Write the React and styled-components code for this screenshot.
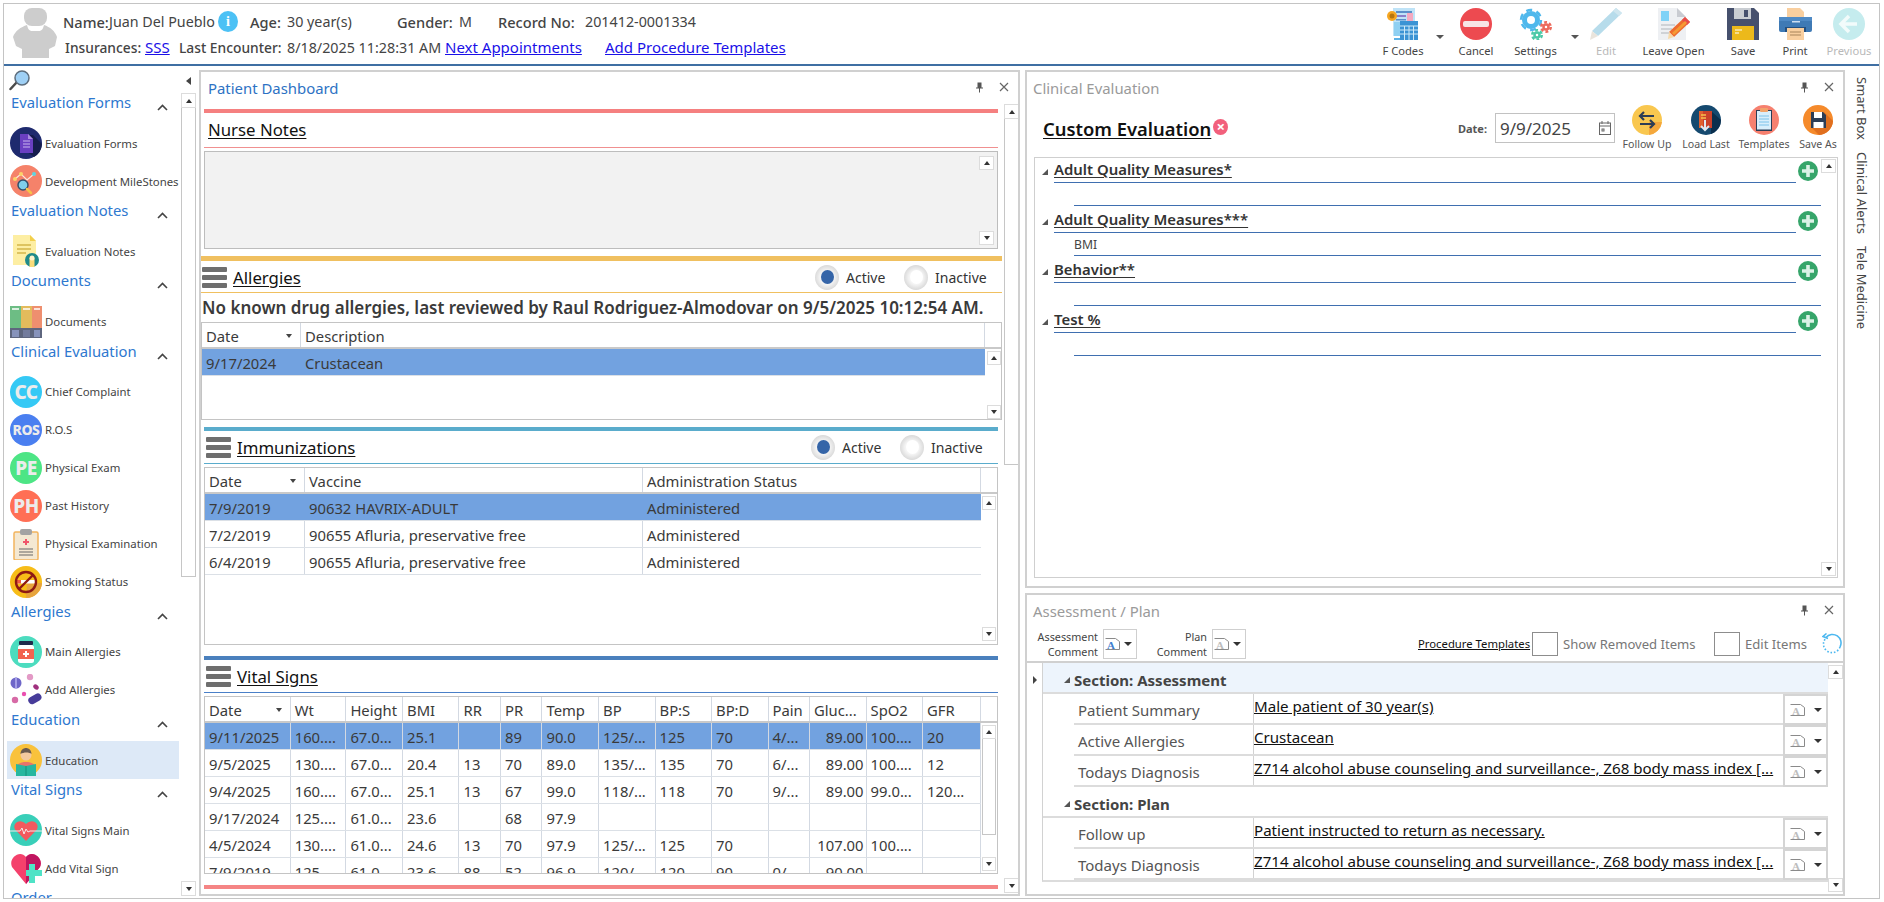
import React from 'react';
import styled, { createGlobalStyle } from 'styled-components';

const Global = createGlobalStyle`
  html, body { margin: 0; padding: 0; background: #fff; }
  body { width: 1884px; height: 902px; overflow: hidden; font-family: "Noto Sans", "Open Sans", sans-serif; color: #333; }
  * { box-sizing: border-box; }
`;

const Frame = styled.div`
  margin: 3px 0 0 3px; width: 1877px; height: 896px;
  border: 1px solid #c4c4c4; display: flex; flex-direction: column; overflow: hidden;
`;
const Header = styled.header`
  height: 62px; flex: none; display: flex; border-bottom: 2px solid #3f6fa3;
`;
const AvatarSlot = styled.div`margin: 4px 6px 0 9px; flex: none;`;
const PatientInfo = styled.div`flex: 1; padding-top: 5px;`;
const InfoRow = styled.div`display: flex; align-items: center; height: 25.5px; font-size: 14.3px; white-space: nowrap;`;
const Field = styled.div`display: flex; align-items: center; flex: none; width: ${p => p.$w}px;`;
const Label = styled.span`
  font-weight: 500; font-size: ${p => p.$s || 14.6}px; color: #444; flex: none; width: ${p => p.$w ? p.$w + 'px' : 'auto'}; padding-left: ${p => p.$pl || 0}px;
`;
const Value = styled.span`color: #444; flex: none; width: ${p => p.$w ? p.$w + 'px' : 'auto'};`;
const HeadLink = styled.a`color: #1a10e8; font-size: 15px; text-decoration: underline; flex: none; width: ${p => p.$w ? p.$w + 'px' : 'auto'};`;
const InfoBadge = styled.span`
  width: 20px; height: 21px; border-radius: 50%; background: #4cc1f5; color: #fff; margin-left: 3px; flex: none;
  display: flex; align-items: center; justify-content: center; font-size: 14px; font-family: "Liberation Serif", serif; font-weight: 700;
`;
const Toolbar = styled.div`display: flex; flex: none; width: 503px; padding-top: 4px;`;
const ToolItem = styled.div`
  width: ${p => p.$w}px; flex: none; display: flex; flex-direction: column; align-items: center;
  font-size: 11.2px; color: ${p => p.$off ? '#b9b9b9' : '#444'}; white-space: nowrap;
`;
const ToolLabel = styled.span`margin-top: 3px; line-height: 16px;`;
const CaretSlot = styled.div`width: ${p => p.$w}px; flex: none; display: flex; justify-content: center; padding-top: 27px;`;
const Caret = styled.i`
  display: block; width: 0; height: 0; border-left: 4px solid transparent; border-right: 4px solid transparent;
  border-top: 4px solid ${p => p.$c || '#555'};
`;

const Body = styled.div`flex: 1; display: flex; min-height: 0;`;

const Nav = styled.nav`width: 195px; flex: none; display: flex; flex-direction: column; min-height: 0;`;
const NavTop = styled.div`height: 26px; flex: none; display: flex; align-items: flex-start; justify-content: space-between; padding: 4px 8px 0 5px;`;
const CollapseArrow = styled.i`
  display: block; width: 0; height: 0; margin-top: 7px; border-top: 4px solid transparent; border-bottom: 4px solid transparent; border-right: 5px solid #444;
`;
const NavBody = styled.div`flex: 1; display: flex; min-height: 0;`;
const NavList = styled.div`width: 177px; flex: none; overflow: hidden; padding-left: 3px;`;
const NavHead = styled.div`
  height: 32.2px; display: flex; justify-content: space-between; align-items: flex-start;
  padding: 0 13px 0 4px; font-size: 14.8px; line-height: 20px; color: #2e78cf; 
`;
const Chevron = styled.svg`margin-top: 12px; flex: none;`;
const NavItem = styled.div`
  height: 38px; display: flex; align-items: center; gap: 3px; padding-left: 3px; font-size: 11.4px; color: #444; white-space: nowrap;
  background: ${p => p.$on ? '#dde9f7' : 'transparent'}; width: 172px;
`;
const IconCircle = styled.span`
  width: 32px; height: 32px; flex: none; border-radius: 50%; background: ${p => p.$c}; color: #ececec; font-weight: 800;
  display: flex; align-items: center; justify-content: center; font-size: ${p => p.$s || 19}px; letter-spacing: -0.5px;
`;
const Scroll = styled.div`
  width: ${p => p.$w || 15}px; flex: none; display: flex; flex-direction: column; justify-content: space-between; height: ${p => p.$h ? p.$h + 'px' : 'auto'};
  margin: ${p => p.$m || 0};
`;
const ScrollPart = styled.div`display: flex; flex-direction: column;`;
const ScrollBtn = styled.div`
  height: ${p => p.$h || 15}px; flex: none; border: 1px solid #dcdcdc; display: flex; align-items: center; justify-content: center; background: #fff;
`;
const Thumb = styled.div`height: ${p => p.$h}px; border: 1px solid #c6c6c6; border-top: none; background: #fff;`;
const Tri = styled.i`
  display: block; width: 0; height: 0; border-left: 3.5px solid transparent; border-right: 3.5px solid transparent;
  ${p => p.$down ? 'border-top: 4px solid #333;' : 'border-bottom: 4px solid #333;'}
`;

const Panel = styled.section`
  border: 2px solid #d0d0d0; display: flex; flex-direction: column; min-height: 0; overflow: hidden; flex: none;
  height: ${p => p.$h}px; width: ${p => p.$w ? p.$w + 'px' : 'auto'}; margin: ${p => p.$m || 0};
`;
const PanelBar = styled.div`
  height: 32px; flex: none; display: flex; align-items: center; justify-content: space-between; padding: 0 9px 0 ${p => p.$pl || 6}px;
  font-size: 14.9px; color: ${p => p.$blue ? '#2d72c4' : '#9a9a9a'};
`;
const PanelTools = styled.div`display: flex; align-items: center; gap: 15px; margin-top: -2px;`;

const DashBody = styled.div`flex: 1; display: flex; min-height: 0;`;
const DashContent = styled.div`width: 802px; flex: none; overflow: hidden;`;
const Inset = styled.div`padding: 0 ${p => p.$r}px 0 ${p => p.$l}px; margin-top: ${p => p.$t || 0}px;`;
const ColorBar = styled.div`height: ${p => p.$h || 4}px; background: ${p => p.$c};`;
const SectionHead = styled.div`
  height: ${p => p.$h}px; display: flex; align-items: center; border-bottom: 1px solid ${p => p.$c};
  padding: ${p => p.$pt || 0}px 0 ${p => p.$pb || 0}px ${p => p.$pl || 0}px;
`;
const SectionTitle = styled.span`font-size: 16.8px; color: #111; text-decoration: underline; text-underline-offset: 2px; margin-left: ${p => p.$ml || 0}px;`;
const Burger = styled.span`display: flex; flex-direction: column; gap: 3px; width: 25px; flex: none;`;
const BurgerBar = styled.i`display: block; height: 5px; background: #6e6e6e; border-radius: 1px;`;
const RadioGroup = styled.div`margin-left: auto; display: flex; align-items: center; font-size: 14px; color: #333; padding-right: ${p => p.$pr}px;`;
const Radio = styled.span`
  width: 24px; height: 25px; border-radius: 50%; flex: none; display: flex; align-items: center; justify-content: center;
  background: radial-gradient(circle, #f4f4f4 40%, #d6d6d6 75%, #f0f0f0 100%); margin-right: 7px;
`;
const RadioDot = styled.i`display: block; width: 13px; height: 14px; border-radius: 50%; background: ${p => p.$on ? '#3565a8' : '#fff'};`;
const RadioLabel = styled.span`width: ${p => p.$w}px;`;

const NotesBox = styled.div`
  margin-top: 3px; height: 98px; background: #f2f2f2; border: 1px solid #bdbdbd; display: flex; justify-content: flex-end; padding: 4px 3px 3px 0;
`;
const Notice = styled.div`height: 29px; display: flex; align-items: center; padding-left: 1px; font-size: 17px; font-weight: 600; color: #3a3a3a; white-space: nowrap;`;

const TableBox = styled.div`
  height: ${p => p.$h}px; border: 1px solid #c4c4c4; display: flex; flex-direction: column; overflow: hidden; margin-top: ${p => p.$t || 0}px;
`;
const TableRow = styled.div`
  display: grid; grid-template-columns: ${p => p.$cols}; height: 27px; flex: none;
  background: ${p => p.$sel ? '#72a2e0' : 'transparent'}; border-bottom: 1px solid #dbe0e6;
`;
const HeadRow = styled(TableRow)`height: 26px; border-bottom: 2px solid #c9c9c9; color: #444;`;
const Cell = styled.div`
  font-size: 14.8px; line-height: 20px; padding: 2px 2px 0 4px; white-space: nowrap; overflow: hidden; color: #3a3a3a;
  border-right: ${p => p.$line ? '1px solid #d3d9e2' : 'none'}; display: flex; justify-content: ${p => p.$right ? 'flex-end' : 'space-between'}; align-items: center;
`;
const TableBody = styled.div`flex: 1; display: flex; min-height: 0; overflow: hidden;`;
const RowsCol = styled.div`width: ${p => p.$w}px; flex: none; overflow: hidden;`;
const SortMark = styled.i`
  display: block; flex: none; margin-right: 6px; width: 0; height: 0; border-left: 3px solid transparent; border-right: 3px solid transparent; border-top: 4px solid #444;
`;

const RightCol = styled.div`width: 820px; flex: none; margin-left: 5px; padding-top: 4px;`;
const EvalTop = styled.div`height: 53px; flex: none; display: flex; padding-left: 16px;`;
const EvalTitle = styled.h2`
  margin: 12px 0 0; font-size: 18.4px; line-height: 26px; font-weight: 600; color: #111; text-decoration: underline; text-underline-offset: 2px; white-space: nowrap; height: 26px;
`;
const ClearIcon = styled.span`
  margin: 15px 0 0 2px; width: 15px; height: 16px; border-radius: 50%; background: #f2607c; color: #fff; font-size: 15px; font-weight: 700; line-height: 15px; text-align: center; flex: none;
`;
const DateLabel = styled.span`margin: 17px 0 0 auto; font-size: 11px; font-weight: 700; color: #555;`;
const DateInput = styled.div`
  margin: 9px 0 0 8px; width: 120px; height: 30px; border: 1px solid #c2c2c2; display: flex; align-items: center; justify-content: space-between; padding: 0 3px 0 4px; font-size: 17px; color: #444; flex: none;
`;
const QuickActions = styled.div`display: flex; margin: 1px 0 0 2px; flex: none;`;
const QuickItem = styled.div`
  width: ${p => p.$w}px; display: flex; flex-direction: column; align-items: center; font-size: 10.6px; color: #555; white-space: nowrap;
`;
const QuickLabel = styled.span`margin-top: 2px; line-height: 14px;`;
const EvalList = styled.div`
  flex: 1; margin: 0 5px 8px 7px; border: 1px solid #cfcfcf; display: flex; min-height: 0;
`;
const EvalGroups = styled.div`width: 786px; flex: none; padding-top: 1px;`;
const EvalGroup = styled.div`height: 50px;`;
const EvalHead = styled.div`display: flex; height: 24px;`;
const ExpandMark = styled.span`width: 20px; flex: none; display: flex; justify-content: center; padding-top: 10px;`;
const CornerTri = styled.i`
  display: block; width: 0; height: 0; border-left: 6px solid transparent; border-bottom: 6px solid #555;
`;
const EvalHeadMain = styled.div`flex: 1; border-bottom: 1px solid #3f6fb0; display: flex; align-items: center; padding-bottom: 3px; margin-left: -1px;`;
const EvalName = styled.span`
  font-size: 14.9px; font-weight: 600; color: #333; text-decoration: underline; text-underline-offset: 2px; white-space: nowrap;
`;
const PlusSlot = styled.span`width: 25px; flex: none; display: flex; align-items: flex-start; padding: 2px 0 0 2px;`;
const EvalSub = styled.div`
  margin-left: 39px; height: 23px; border-bottom: 1px solid #3f6fb0; font-size: 12.2px; color: #444; line-height: 24px;
`;

const ApToolbar = styled.div`
  height: 38px; flex: none; display: flex; align-items: center; border-bottom: 2px solid #d0d0d0; margin-top: -2px; padding-top: 1px;
`;
const CommentLabel = styled.div`
  width: ${p => p.$w}px; flex: none; text-align: right; font-size: 10.8px; line-height: 15px; color: #444; padding-right: 5px;
`;
const CommentBtn = styled.div`
  width: 34px; height: 30px; flex: none; border: 1px solid #cfcfcf; display: flex; align-items: center; justify-content: space-between; padding: 0 4px 0 1px;
`;
const ProcLink = styled.a`
  margin-left: 172px; font-size: 11.3px; color: #111; text-decoration: underline; white-space: nowrap; width: 114px; flex: none;
`;
const CheckBox = styled.span`width: 26px; height: 24px; flex: none; border: 1px solid #8d8d8d; margin-right: 5px;`;
const CheckLabel = styled.span`font-size: 13.1px; color: #777; width: ${p => p.$w}px; flex: none; white-space: nowrap;`;
const SpinnerSlot = styled.span`margin-left: 16px; flex: none; display: flex;`;
const ApGrid = styled.div`flex: 1; display: flex; min-height: 0;`;
const ExpandCol = styled.div`width: 15px; flex: none; display: flex; justify-content: center; padding-top: 13px;`;
const RightTri = styled.i`
  display: block; width: 0; height: 0; border-top: 4px solid transparent; border-bottom: 4px solid transparent; border-left: 4px solid #444;
`;
const ApRows = styled.div`width: 786px; flex: none; align-self: flex-start; border-left: 1px solid #d2d2d2; border-bottom: 2px solid #dcdcdc;`;
const SectionRow = styled.div`
  height: 31px; display: flex; align-items: center; padding: 4px 0 0 21px; background: ${p => p.$tint ? '#edf4fc' : '#fff'}; border-bottom: 2px solid #dcdcdc;
  font-size: 15px; font-weight: 700; color: #444; gap: 4px;
`;
const ApRow = styled.div`height: 31px; display: flex;`;
const ApRowInner = styled.div`margin-left: 31px; flex: 1; display: flex; min-width: 0; border-bottom: 2px solid #dcdcdc;`;
const ApLabel = styled.div`width: 180px; flex: none; font-size: 15px; color: #555; padding: 2px 0 0 4px; line-height: 28px; border-right: 1px solid #d2d2d2;`;
const ApValue = styled.div`flex: 1; min-width: 0; font-size: 15.1px; color: #111; text-decoration: underline; white-space: nowrap; overflow: hidden; line-height: 24px;`;
const ApBtn = styled.div`
  width: 45px; flex: none; margin-bottom: -2px; border: 2px solid #d4d4d4; display: flex; align-items: center; justify-content: space-between; padding: 0 4px 0 5px;
`;

const Tabs = styled.aside`width: 33px; flex: none; display: flex; flex-direction: column; align-items: center; padding-top: 11px; gap: 12px;`;
const TabText = styled.span`writing-mode: vertical-rl; font-size: 13px; color: #444; white-space: nowrap;`;

const Pin = () => (
  <svg width="9" height="11" viewBox="0 0 9 11"><path d="M2.5 0.5h4v5h1.5v1h-3v4h-1v-4h-3v-1h1.500z" fill="#555" /></svg>
);
const CloseX = () => (
  <svg width="10" height="10" viewBox="0 0 10 10"><path d="M1 1l8 8M9 1l-8 8" stroke="#666" strokeWidth="1.2" /></svg>
);
const Up = () => (
  <Chevron width="11" height="7" viewBox="0 0 11 7"><path d="M1 6l4.500-4.500L10 6" fill="none" stroke="#444" strokeWidth="1.600" /></Chevron>
);

const Avatar = () => (
  <svg width="44" height="51" viewBox="0 0 44 51">
    <rect x="11" y="0" width="23" height="18" rx="8" fill="#cdcdcd" />
    <path d="M14 17c1 4 2 5 4 6h9c2-1 3-2 4-6 6 2 11 6 13 12l-2 9-6 3v9H9v-9l-6-3-3-9c2-6 8-10 14-12z" fill="#cdcdcd" />
  </svg>
);

const FCodesIcon = () => (
  <svg width="32" height="32" viewBox="0 0 32 32">
    <rect x="6" y="0" width="22" height="28" fill="#bfe3f7" />
    <rect x="9" y="3" width="16" height="2" fill="#5b8fc9" />
    <rect x="9" y="7" width="10" height="2" fill="#8b7fc9" />
    <rect x="20" y="5" width="6" height="8" fill="#f4a9c0" />
    <rect x="9" y="11" width="10" height="1.500" fill="#5b8fc9" />
    <circle cx="5" cy="8" r="5" fill="#f5a623" /><circle cx="5" cy="8" r="2.500" fill="#b8760c" />
    <rect x="7" y="14" width="10" height="14" fill="#8fd0f2" />
    <rect x="13" y="13" width="18" height="19" fill="#3c93d4" />
    <path d="M13 18h18M13 22h18M13 26h18M17.500 18v14M22 18v14M26.500 18v14" stroke="#cfeaf8" strokeWidth="1" />
    <path d="M7 30h6v2H7z" fill="#5cb1e6" />
  </svg>
);
const CancelIcon = () => (
  <svg width="32" height="32" viewBox="0 0 32 32"><circle cx="16" cy="16" r="16" fill="#ed4a50" /><rect x="3" y="13" width="26" height="6" rx="2" fill="#f7e4e4" /></svg>
);
const Gear = ({ cx, cy, r, c, w }) => (
  <g>
    <circle cx={cx} cy={cy} r={r} fill="none" stroke={c} strokeWidth={w} />
    <circle cx={cx} cy={cy} r={r + w / 2 + 1} fill="none" stroke={c} strokeWidth="2.500" strokeDasharray={`${(r + w / 2 + 1) * 0.6} ${(r + w / 2 + 1) * 0.45}`} />
  </g>
);
const SettingsIcon = () => (
  <svg width="34" height="32" viewBox="0 0 34 32">
    <Gear cx={12} cy={12} r={6.500} c="#4fb8ec" w={5} />
    <Gear cx={27} cy={19} r={2.500} c="#ec6a5c" w={2.500} />
    <Gear cx={18} cy={27} r={2.500} c="#4cc9a8" w={2.500} />
  </svg>
);
const PencilIcon = () => (
  <svg width="32" height="32" viewBox="0 0 32 32">
    <path d="M26 0l6 5L8 28l-6-5z" fill="#b7dceb" />
    <path d="M2 23l6 5-8 4z" fill="#e9e4dc" />
    <path d="M26 0l6 5-3 3-6-5z" fill="#cfe6ef" />
  </svg>
);
const LeaveOpenIcon = () => (
  <svg width="32" height="32" viewBox="0 0 32 32">
    <path d="M0 0h19l9 9v23H0z" fill="#eef0f3" /><path d="M19 0l9 9h-9z" fill="#c9ccd2" />
    <rect x="3" y="3" width="8" height="10" fill="#7fd2f7" />
    <path d="M3 17h14M3 21h11M3 25h8" stroke="#c5c8cd" strokeWidth="1.500" />
    <path d="M27 9l5 5-16 15-5-5z" fill="#ee6b2e" /><path d="M11 24l5 5-6 2z" fill="#f7d9a8" />
    <path d="M27 9l5 5-3 3-5-5z" fill="#e74c4c" /><path d="M14 25l13-12 2 2-13 12z" fill="#f59a34" />
  </svg>
);
const SaveIcon = () => (
  <svg width="32" height="32" viewBox="0 0 32 32">
    <path d="M0 0h27l5 5v27H0z" fill="#46506d" />
    <rect x="7" y="0" width="17" height="11" fill="#c9cdd2" /><rect x="17" y="2" width="4" height="7" fill="#46506d" />
    <rect x="5" y="18" width="22" height="14" fill="#ecb91b" /><path d="M8 22h7M8 25h4" stroke="#f7e9b5" strokeWidth="1.500" />
  </svg>
);
const PrintIcon = () => (
  <svg width="33" height="32" viewBox="0 0 33 32">
    <path d="M8 0h13l4 4v8H8z" fill="#f9cf9f" />
    <rect x="0" y="9" width="33" height="15" rx="2" fill="#3f7ab5" />
    <rect x="0" y="9" width="33" height="4" fill="#4f8ac5" />
    <rect x="13" y="13" width="8" height="1.500" fill="#cfe0f2" />
    <rect x="6" y="19" width="21" height="5" fill="#25507f" />
    <rect x="8" y="20" width="17" height="12" fill="#f9cf9f" />
    <path d="M11 24h11M11 27h11" stroke="#a8845a" strokeWidth="1.200" />
  </svg>
);
const PrevIcon = () => (
  <svg width="32" height="32" viewBox="0 0 32 32">
    <circle cx="16" cy="16" r="16" fill="#c5ecee" />
    <path d="M16 8l-8 8 8 8M8 16h16" fill="none" stroke="#f2fbfb" strokeWidth="3.500" />
  </svg>
);
const Search = () => (
  <svg width="21" height="21" viewBox="0 0 21 21">
    <path d="M8 12L1.500 19" stroke="#4a4a4a" strokeWidth="2.500" strokeLinecap="round" />
    <circle cx="13" cy="8" r="7" fill="#9fd0f5" stroke="#5d6d7d" strokeWidth="1.500" />
  </svg>
);
const IcoEvalForms = () => (
  <svg width="32" height="32" viewBox="0 0 32 32">
    <circle cx="16" cy="16" r="16" fill="#1e2a6e" />
    <path d="M13 8h10l9 9a16 16 0 0 1-8 13L16 24z" fill="#151c4d" />
    <path d="M10 7h8l5 5v14H10z" fill="#6a3fc2" /><path d="M18 7l5 5h-5z" fill="#a98ce0" />
    <path d="M13 14h7M13 17h7M13 20h7" stroke="#c9b6ee" strokeWidth="1" />
  </svg>
);
const IcoMilestone = () => (
  <svg width="32" height="32" viewBox="0 0 32 32">
    <circle cx="16" cy="16" r="16" fill="#f5826a" />
    <path d="M5 14l6-5 6 6 7-6" fill="none" stroke="#fce6de" strokeWidth="1.200" />
    <circle cx="5" cy="14" r="2" fill="#fbd46a" /><circle cx="11" cy="9" r="2" fill="#fbd46a" /><circle cx="24" cy="9" r="2" fill="#5fd5e0" />
    <circle cx="13" cy="20" r="5" fill="#7fd0ea" stroke="#34506a" strokeWidth="1.500" />
    <path d="M17 24l4 4" stroke="#f6c24a" strokeWidth="2.500" strokeLinecap="round" />
  </svg>
);
const IcoNotes = () => (
  <svg width="32" height="32" viewBox="0 0 32 32">
    <path d="M3 0h17l6 6v24H3z" fill="#fdeea3" /><path d="M20 0l6 6h-6z" fill="#f2cf4d" />
    <path d="M7 10h14M7 14h14M7 18h9" stroke="#d4b64b" strokeWidth="1.300" />
    <circle cx="22" cy="25" r="7" fill="#1f8a8a" /><rect x="19.500" y="23" width="5" height="9" fill="#f9dc7a" /><circle cx="22" cy="23" r="2.500" fill="#fff3cc" />
  </svg>
);
const IcoDocs = () => (
  <svg width="32" height="32" viewBox="0 0 32 32">
    <rect x="0" y="0" width="11" height="32" fill="#6dbd84" /><rect x="11" y="0" width="11" height="32" fill="#e3bb5c" /><rect x="22" y="0" width="10" height="32" fill="#ee8f6f" />
    <path d="M2 3h7M13 3h7M24 3h6" stroke="#fff" strokeWidth="1.600" />
    <rect x="0" y="22" width="32" height="10" fill="#5e667e" />
    <rect x="2" y="24" width="7" height="7" fill="#8793bb" /><rect x="13" y="24" width="7" height="7" fill="#737c9d" /><rect x="24" y="24" width="6" height="7" fill="#8793bb" />
  </svg>
);
const IcoClipboard = () => (
  <svg width="32" height="32" viewBox="0 0 32 32">
    <rect x="4" y="4" width="24" height="28" rx="1.500" fill="#f4e8d2" stroke="#f2b45e" strokeWidth="1.500" />
    <rect x="10" y="1" width="12" height="6" rx="2" fill="#a3a3a3" />
    <path d="M16 11v6M13 14h6" stroke="#f0566a" strokeWidth="2" />
    <path d="M9 21h14M9 24h14M9 27h14" stroke="#666" strokeWidth="1.100" />
  </svg>
);
const IcoSmoking = () => (
  <svg width="32" height="32" viewBox="0 0 32 32">
    <circle cx="16" cy="16" r="16" fill="#f7bd18" />
    <path d="M17 17h15a16 16 0 0 1-16 15z" fill="#e7a43d" />
    <rect x="5" y="14" width="22" height="3.500" fill="#fff" /><rect x="5" y="14" width="6" height="3.500" fill="#ef5b43" />
    <circle cx="16" cy="16" r="10" fill="none" stroke="#8e1a14" strokeWidth="2.400" /><path d="M9 23L23 9" stroke="#8e1a14" strokeWidth="2.400" />
  </svg>
);
const IcoBottle = () => (
  <svg width="32" height="32" viewBox="0 0 32 32">
    <circle cx="16" cy="16" r="16" fill="#4cdcbf" />
    <rect x="9" y="5" width="14" height="4" rx="1" fill="#1f2a4a" />
    <rect x="8" y="9" width="16" height="18" rx="2.500" fill="#fff" />
    <rect x="8" y="13" width="16" height="10" fill="#f2634f" />
    <path d="M16 15v6M13 18h6" stroke="#fff" strokeWidth="2" />
  </svg>
);
const IcoPills = () => (
  <svg width="32" height="32" viewBox="0 0 32 32">
    <circle cx="6" cy="9" r="5.500" fill="#6e66c8" /><rect x="5" y="3.500" width="2" height="11" fill="#a49ee6" />
    <circle cx="20" cy="3" r="3.200" fill="#e39ac6" /><ellipse cx="26" cy="13" rx="3" ry="2.300" fill="#a0307e" transform="rotate(40 26 13)" />
    <circle cx="14" cy="20" r="2.200" fill="#ea4fb0" /><circle cx="5" cy="26" r="3.200" fill="#d76aa6" />
    <rect x="18" y="21" width="14" height="7.500" rx="3.700" fill="#473c9a" transform="rotate(-30 25 25)" />
  </svg>
);
const IcoEducation = () => (
  <svg width="32" height="32" viewBox="0 0 32 32">
    <circle cx="16" cy="16" r="16" fill="#f9c23c" />
    <path d="M6 32V22c3-3 6-4 10-4s7 1 10 4v10z" fill="#e9736a" />
    <circle cx="16" cy="11" r="5.500" fill="#f4c9a0" /><path d="M10.500 10c0-4 3-6 5.500-6s5.500 2 5.500 6c-2-2-8-2-11 0z" fill="#6a5a50" />
    <path d="M6 20l10 2 10-2v12H6z" fill="#27b7a0" /><path d="M16 22v10" stroke="#168f7b" strokeWidth="1" />
  </svg>
);
const IcoHeartbeat = () => (
  <svg width="32" height="32" viewBox="0 0 32 32">
    <circle cx="16" cy="16" r="16" fill="#39cfb9" />
    <path d="M16 27L5 15.500C2 9 10 4 16 10c6-6 14-1 11 5.500z" fill="#f2595e" />
    <path d="M0 17h10l2-3 2 6 2-5 2 3 2-1h12" fill="none" stroke="#f5e9e9" strokeWidth="1" />
  </svg>
);
const IcoAddVital = () => (
  <svg width="32" height="32" viewBox="0 0 32 32">
    <path d="M16 32L2 15C-2 6 10 -3 16 5c6-8 18 1 14 10z" fill="#f4416c" />
    <path d="M16 32V5c6-8 18 1 14 10z" fill="#bf1560" />
    <path d="M19 12h6v6h7v6h-7v7h-6v-7h-3v-6h3z" fill="#4fe3c6" />
  </svg>
);
const IcoFollow = () => (
  <svg width="30" height="30" viewBox="0 0 30 30">
    <circle cx="15" cy="15" r="15" fill="#f9c74f" /><path d="M17 17h13a15 15 0 0 1-13 13z" fill="#f5a83c" />
    <path d="M8 11h14M12 7l-4 4 4 4M22 19H8M18 15l4 4-4 4" fill="none" stroke="#2d3d55" strokeWidth="2.200" />
  </svg>
);
const IcoLoad = () => (
  <svg width="30" height="30" viewBox="0 0 30 30">
    <circle cx="15" cy="15" r="15" fill="#15496f" /><path d="M20 6l10 9a15 15 0 0 1-10 14z" fill="#0b2f4d" />
    <rect x="8" y="6" width="13" height="17" fill="#c9412a" /><rect x="8" y="6" width="4" height="17" fill="#e0602f" />
    <path d="M10 10h5M10 13h5" stroke="#f5c14e" strokeWidth="1.300" />
    <path d="M14 15v10M10 21l4 4 4-4" fill="none" stroke="#dfe8f0" strokeWidth="2" />
  </svg>
);
const IcoTemplates = () => (
  <svg width="30" height="30" viewBox="0 0 30 30">
    <circle cx="15" cy="15" r="15" fill="#f6806f" />
    <rect x="7" y="5" width="16" height="21" fill="#2d3d55" /><rect x="8" y="6" width="14" height="18.500" fill="#d9eefb" />
    <rect x="11" y="3" width="8" height="4" rx="1" fill="#f2a36b" />
    <path d="M10 11h10M10 14h10M10 17h10M10 20h10" stroke="#7cc2ea" strokeWidth="1" />
  </svg>
);
const IcoSaveAs = () => (
  <svg width="30" height="30" viewBox="0 0 30 30">
    <circle cx="15" cy="15" r="15" fill="#f58a2b" /><path d="M21 7l9 9a15 15 0 0 1-14 14l-8-8z" fill="#e06f1e" />
    <path d="M8 7h12l3 3v13H8z" fill="#2d3d55" /><rect x="11" y="7" width="8" height="6" fill="#fff" /><rect x="10.500" y="17" width="10" height="6" fill="#fff" />
  </svg>
);
const Calendar = () => (
  <svg width="12" height="14" viewBox="0 0 12 14" fill="none" stroke="#666">
    <rect x="0.500" y="2" width="11" height="11.500" /><path d="M0.500 5h11M3 0v3M9 0v3" /><rect x="3" y="8" width="2" height="2" />
  </svg>
);
const PlusIcon = () => (
  <svg width="20" height="20" viewBox="0 0 20 20">
    <circle cx="10" cy="10" r="10" fill="#36a56a" /><path d="M10 4v12M4 10h12" stroke="#dcf2e6" strokeWidth="3.600" />
  </svg>
);
const DocA = ({ c }) => (
  <svg width="15" height="12" viewBox="0 0 15 12">
    <path d="M0.500 0.500h10l4 3v8h-14" fill="none" stroke="#8a8a8a" strokeWidth="1" />
    <text x="2" y="10.500" fontSize="11" fontFamily="Liberation Serif, serif" fontWeight="700" fill={c}>A</text>
  </svg>
);
const Spinner = () => (
  <svg width="20" height="21" viewBox="0 0 20 21" fill="none">
    <path d="M4 4.500a8.500 8.500 0 0 1 14 9.500" stroke="#4db8f0" strokeWidth="1.600" />
    <path d="M18 14a8.500 8.500 0 0 1-16.500-3c0-2 .5-3 1.500-5" stroke="#4db8f0" strokeWidth="1.600" strokeDasharray="1.600 1.800" />
    <path d="M4.500 0.500L1 3.500l5 2" stroke="#4db8f0" strokeWidth="1.500" />
  </svg>
);

const ScrollBar = ({ w, m, btn }) => (
  <Scroll $w={w} $m={m}>
    <ScrollBtn $h={btn}><Tri /></ScrollBtn>
    <ScrollBtn $h={btn}><Tri $down /></ScrollBtn>
  </Scroll>
);

const navGroups = [
  ['Evaluation Forms', [[<IcoEvalForms />, 'Evaluation Forms'], [<IcoMilestone />, 'Development MileStones']]],
  ['Evaluation Notes', [[<IcoNotes />, 'Evaluation Notes']]],
  ['Documents', [[<IcoDocs />, 'Documents']]],
  ['Clinical Evaluation', [
    [<IconCircle $c="#35c9f5">CC</IconCircle>, 'Chief Complaint'],
    [<IconCircle $c="#4a7ff0" $s={14}>ROS</IconCircle>, 'R.O.S'],
    [<IconCircle $c="#4de585">PE</IconCircle>, 'Physical Exam'],
    [<IconCircle $c="#ff6f55">PH</IconCircle>, 'Past History'],
    [<IcoClipboard />, 'Physical Examination'],
    [<IcoSmoking />, 'Smoking Status'],
  ]],
  ['Allergies', [[<IcoBottle />, 'Main Allergies'], [<IcoPills />, 'Add Allergies']]],
  ['Education', [[<IcoEducation />, 'Education', true]]],
  ['Vital Signs', [[<IcoHeartbeat />, 'Vital Signs Main'], [<IcoAddVital />, 'Add Vital Sign']]],
  ['Order', []],
];

const allergyCols = '99px 684px 1fr';
const immCols = '100px 338px 338px 1fr';
const vitalCols = '85.7px 55.7px 56.7px 56.4px 41.6px 41.4px 56.6px 56.5px 56.5px 56.5px 41.5px 56.5px 56.5px 57.6px';
const vitalHeadCols = `${vitalCols} 1fr`;

const vitals = [
  ['9/11/2025', '160....', '67.0...', '25.1', '', '89', '90.0', '125/...', '125', '70', '4/...', '89.00', '100....', '20'],
  ['9/5/2025', '130....', '67.0...', '20.4', '13', '70', '89.0', '135/...', '135', '70', '6/...', '89.00', '100....', '12'],
  ['9/4/2025', '160....', '67.0...', '25.1', '13', '67', '99.0', '118/...', '118', '70', '9/...', '89.00', '99.0...', '120...'],
  ['9/17/2024', '125....', '61.0...', '23.6', '', '68', '97.9', '', '', '', '', '', '', ''],
  ['4/5/2024', '130....', '61.0...', '24.6', '13', '70', '97.9', '125/...', '125', '70', '', '107.00', '100....', ''],
  ['7/9/2019', '125....', '61.0...', '23.6', '88', '52', '96.9', '120/...', '120', '90', '0/...', '90.00', '', ''],
];
const vitalHead = ['Date', 'Wt', 'Height', 'BMI', 'RR', 'PR', 'Temp', 'BP', 'BP:S', 'BP:D', 'Pain', 'Gluc...', 'SpO2', 'GFR'];

const evalGroups = [
  ['Adult Quality Measures*', ''],
  ['Adult Quality Measures***', 'BMI'],
  ['Behavior**', ''],
  ['Test %', ''],
];

const Burger3 = () => <Burger><BurgerBar /><BurgerBar /><BurgerBar /></Burger>;
const Radios = ({ pr }) => (
  <RadioGroup $pr={pr}>
    <Radio><RadioDot $on /></Radio><RadioLabel $w={58}>Active</RadioLabel>
    <Radio><RadioDot /></Radio><RadioLabel $w={50}>Inactive</RadioLabel>
  </RadioGroup>
);
const DIAG = 'Z714 alcohol abuse counseling and surveillance-, Z68 body mass index [...';
const apSections = [
  ['Section: Assessment', true, [['Patient Summary', 'Male patient of 30 year(s)'], ['Active Allergies', 'Crustacean'], ['Todays Diagnosis', DIAG]]],
  ['Section: Plan', false, [['Follow up', 'Patient instructed to return as necessary.'], ['Todays Diagnosis', DIAG]]],
];

export default function App() {
  return (
    <Frame>
      <Global />
      <Header>
        <AvatarSlot><Avatar /></AvatarSlot>
        <PatientInfo>
          <InfoRow>
            <Field $w={187}><Label $w={46}>Name:</Label><Value>Juan Del Pueblo</Value><InfoBadge>i</InfoBadge></Field>
            <Field $w={147}><Label $w={37}>Age:</Label><Value>30 year(s)</Value></Field>
            <Field $w={101}><Label $w={62}>Gender:</Label><Value>M</Value></Field>
            <Field $w={200}><Label $w={87}>Record No:</Label><Value>201412-0001334</Value></Field>
          </InfoRow>
          <InfoRow>
            <Label $w={82} $s={13.8} $pl={2}>Insurances:</Label>
            <HeadLink $w={34}>SSS</HeadLink>
            <Label $w={108} $s={13.8}>Last Encounter:</Label>
            <Value $w={158}>8/18/2025 11:28:31 AM</Value>
            <HeadLink $w={160}>Next Appointments</HeadLink>
            <HeadLink>Add Procedure Templates</HeadLink>
          </InfoRow>
        </PatientInfo>
        <Toolbar>
          <ToolItem $w={54}><FCodesIcon /><ToolLabel>F Codes</ToolLabel></ToolItem>
          <CaretSlot $w={20}><Caret /></CaretSlot>
          <ToolItem $w={52}><CancelIcon /><ToolLabel>Cancel</ToolLabel></ToolItem>
          <ToolItem $w={67}><SettingsIcon /><ToolLabel>Settings</ToolLabel></ToolItem>
          <CaretSlot $w={12}><Caret /></CaretSlot>
          <ToolItem $w={50} $off><PencilIcon /><ToolLabel>Edit</ToolLabel></ToolItem>
          <ToolItem $w={85}><LeaveOpenIcon /><ToolLabel>Leave Open</ToolLabel></ToolItem>
          <ToolItem $w={54}><SaveIcon /><ToolLabel>Save</ToolLabel></ToolItem>
          <ToolItem $w={50}><PrintIcon /><ToolLabel>Print</ToolLabel></ToolItem>
          <ToolItem $w={58} $off><PrevIcon /><ToolLabel>Previous</ToolLabel></ToolItem>
        </Toolbar>
      </Header>

      <Body>
        <Nav>
          <NavTop><Search /><CollapseArrow /></NavTop>
          <NavBody>
            <NavList>
              {navGroups.map(([title, items]) => (
                <React.Fragment key={title}>
                  <NavHead>{title}{items.length ? <Up /> : null}</NavHead>
                  {items.map(([icon, label, on]) => (
                    <NavItem key={label} $on={on}>{icon}{label}</NavItem>
                  ))}
                </React.Fragment>
              ))}
            </NavList>
            <Scroll $w={15} $m="1px 0 2px 0">
              <ScrollPart>
                <ScrollBtn><Tri /></ScrollBtn>
                <Thumb $h={469} />
              </ScrollPart>
              <ScrollBtn><Tri $down /></ScrollBtn>
            </Scroll>
          </NavBody>
        </Nav>

        <Panel $w={821} $h={826} $m="4px 0 0 0">
          <PanelBar $blue $pl={7}>
            <span>Patient Dashboard</span>
            <PanelTools><Pin /><CloseX /></PanelTools>
          </PanelBar>
          <DashBody>
            <DashContent>
              <Inset $l={3} $r={5} $t={5}>
                <ColorBar $c="#f58080" />
                <SectionHead $h={35} $c="#f09090" $pl={4} $pb={2}><SectionTitle>Nurse Notes</SectionTitle></SectionHead>
                <NotesBox><ScrollBar w={15} btn={14} /></NotesBox>
              </Inset>
              <Inset $l={0} $r={1} $t={7}>
                <ColorBar $c="#f0c060" $h={5} />
                <SectionHead $h={32} $c="#f0c060" $pl={1} $pt={1}>
                  <Burger3 /><SectionTitle $ml={6}>Allergies</SectionTitle><Radios pr={17} />
                </SectionHead>
                <Notice>No known drug allergies, last reviewed by Raul Rodriguez-Almodovar on 9/5/2025 10:12:54 AM.</Notice>
                <TableBox $h={98}>
                  <HeadRow $cols={allergyCols}>
                    <Cell $line>Date<SortMark /></Cell><Cell $line>Description</Cell><Cell />
                  </HeadRow>
                  <TableBody>
                    <RowsCol $w={783}>
                      <TableRow $cols="99px 1fr" $sel><Cell>9/17/2024</Cell><Cell>Crustacean</Cell></TableRow>
                    </RowsCol>
                    <ScrollBar w={14} m="2px 0 0 2px" btn={14} />
                  </TableBody>
                </TableBox>
              </Inset>
              <Inset $l={3} $r={5} $t={7}>
                <ColorBar $c="#5aaccc" />
                <SectionHead $h={33} $c="#5aaccc" $pl={2}>
                  <Burger3 /><SectionTitle $ml={6}>Immunizations</SectionTitle><Radios pr={17} />
                </SectionHead>
                <TableBox $h={178} $t={3}>
                  <HeadRow $cols={immCols}>
                    <Cell $line>Date<SortMark /></Cell><Cell $line>Vaccine</Cell><Cell $line>Administration Status</Cell><Cell />
                  </HeadRow>
                  <TableBody>
                    <RowsCol $w={776}>
                      {[['7/9/2019', '90632 HAVRIX-ADULT', true], ['7/2/2019', '90655 Afluria, preservative free'], ['6/4/2019', '90655 Afluria, preservative free']].map(([d, v, sel]) => (
                        <TableRow key={d} $cols="100px 338px 1fr" $sel={sel}>
                          <Cell $line={!sel}>{d}</Cell><Cell $line={!sel}>{v}</Cell><Cell>Administered</Cell>
                        </TableRow>
                      ))}
                    </RowsCol>
                    <ScrollBar w={14} m="2px 0 3px 1px" btn={14} />
                  </TableBody>
                </TableBox>
              </Inset>
              <Inset $l={3} $r={5} $t={11}>
                <ColorBar $c="#4a80bd" />
                <SectionHead $h={33} $c="#4a80c8" $pl={2}>
                  <Burger3 /><SectionTitle $ml={6}>Vital Signs</SectionTitle>
                </SectionHead>
                <TableBox $h={178} $t={3}>
                  <HeadRow $cols={vitalHeadCols}>
                    {vitalHead.map((h, i) => (
                      <Cell key={h} $line>{h}{i === 0 ? <SortMark /> : null}</Cell>
                    ))}
                    <Cell />
                  </HeadRow>
                  <TableBody>
                    <RowsCol $w={776}>
                      {vitals.map((r, i) => (
                        <TableRow key={r[0]} $cols={vitalCols} $sel={i === 0}>
                          {r.map((c, j) => <Cell key={j} $line $right={j === 11}>{c}</Cell>)}
                        </TableRow>
                      ))}
                    </RowsCol>
                    <Scroll $w={14} $m="2px 0 2px 1px">
                      <ScrollPart><ScrollBtn $h={14}><Tri /></ScrollBtn><Thumb $h={96} /></ScrollPart>
                      <ScrollBtn $h={14}><Tri $down /></ScrollBtn>
                    </Scroll>
                  </TableBody>
                </TableBox>
              </Inset>
              <Inset $l={3} $r={5} $t={11}>
                <ColorBar $c="#f58585" />
              </Inset>
            </DashContent>
            <Scroll $w={15} $m="0 0 1px 1px">
              <ScrollPart><ScrollBtn><Tri /></ScrollBtn><Thumb $h={346} /></ScrollPart>
              <ScrollBtn><Tri $down /></ScrollBtn>
            </Scroll>
          </DashBody>
        </Panel>

        <RightCol>
          <Panel $h={518}>
            <PanelBar>
              <span>Clinical Evaluation</span>
              <PanelTools><Pin /><CloseX /></PanelTools>
            </PanelBar>
            <EvalTop>
              <EvalTitle>Custom Evaluation</EvalTitle>
              <ClearIcon>×</ClearIcon>
              <DateLabel>Date:</DateLabel>
              <DateInput>9/9/2025<Calendar /></DateInput>
              <QuickActions>
                <QuickItem $w={60}><IcoFollow /><QuickLabel>Follow Up</QuickLabel></QuickItem>
                <QuickItem $w={58}><IcoLoad /><QuickLabel>Load Last</QuickLabel></QuickItem>
                <QuickItem $w={58}><IcoTemplates /><QuickLabel>Templates</QuickLabel></QuickItem>
                <QuickItem $w={50}><IcoSaveAs /><QuickLabel>Save As</QuickLabel></QuickItem>
              </QuickActions>
            </EvalTop>
            <EvalList>
              <EvalGroups>
                {evalGroups.map(([name, sub]) => (
                  <EvalGroup key={name}>
                    <EvalHead>
                      <ExpandMark><CornerTri /></ExpandMark>
                      <EvalHeadMain><EvalName>{name}</EvalName></EvalHeadMain>
                      <PlusSlot><PlusIcon /></PlusSlot>
                    </EvalHead>
                    <EvalSub>{sub}</EvalSub>
                  </EvalGroup>
                ))}
              </EvalGroups>
              <ScrollBar w={15} m="1px 0 1px 0" btn={14} />
            </EvalList>
          </Panel>
          <Panel $h={303} $m="5px 0 0 0">
            <PanelBar>
              <span>Assessment / Plan</span>
              <PanelTools><Pin /><CloseX /></PanelTools>
            </PanelBar>
            <ApToolbar>
              <CommentLabel $w={76}>Assessment<br />Comment</CommentLabel>
              <CommentBtn><DocA c="#3f7fd0" /><Caret $c="#333" /></CommentBtn>
              <CommentLabel $w={75}>Plan<br />Comment</CommentLabel>
              <CommentBtn><DocA c="#bdbdbd" /><Caret $c="#333" /></CommentBtn>
              <ProcLink>Procedure Templates</ProcLink>
              <CheckBox />
              <CheckLabel $w={151}>Show Removed Items</CheckLabel>
              <CheckBox />
              <CheckLabel $w={61}>Edit Items</CheckLabel>
              <SpinnerSlot><Spinner /></SpinnerSlot>
            </ApToolbar>
            <ApGrid>
              <ExpandCol><RightTri /></ExpandCol>
              <ApRows>
                {apSections.map(([title, tint, rows]) => (
                  <React.Fragment key={title}>
                    <SectionRow $tint={tint}><CornerTri />{title}</SectionRow>
                    {rows.map(([l, v]) => (
                      <ApRow key={l}>
                        <ApRowInner>
                          <ApLabel>{l}</ApLabel>
                          <ApValue>{v}</ApValue>
                          <ApBtn><DocA c="#bdbdbd" /><Caret $c="#333" /></ApBtn>
                        </ApRowInner>
                      </ApRow>
                    ))}
                  </React.Fragment>
                ))}
              </ApRows>
              <ScrollBar w={15} m="2px 0 2px 0" btn={14} />
            </ApGrid>
          </Panel>
        </RightCol>

        <Tabs>
          <TabText>Smart Box</TabText>
          <TabText>Clinical Alerts</TabText>
          <TabText>Tele Medicine</TabText>
        </Tabs>
      </Body>
    </Frame>
  );
}
